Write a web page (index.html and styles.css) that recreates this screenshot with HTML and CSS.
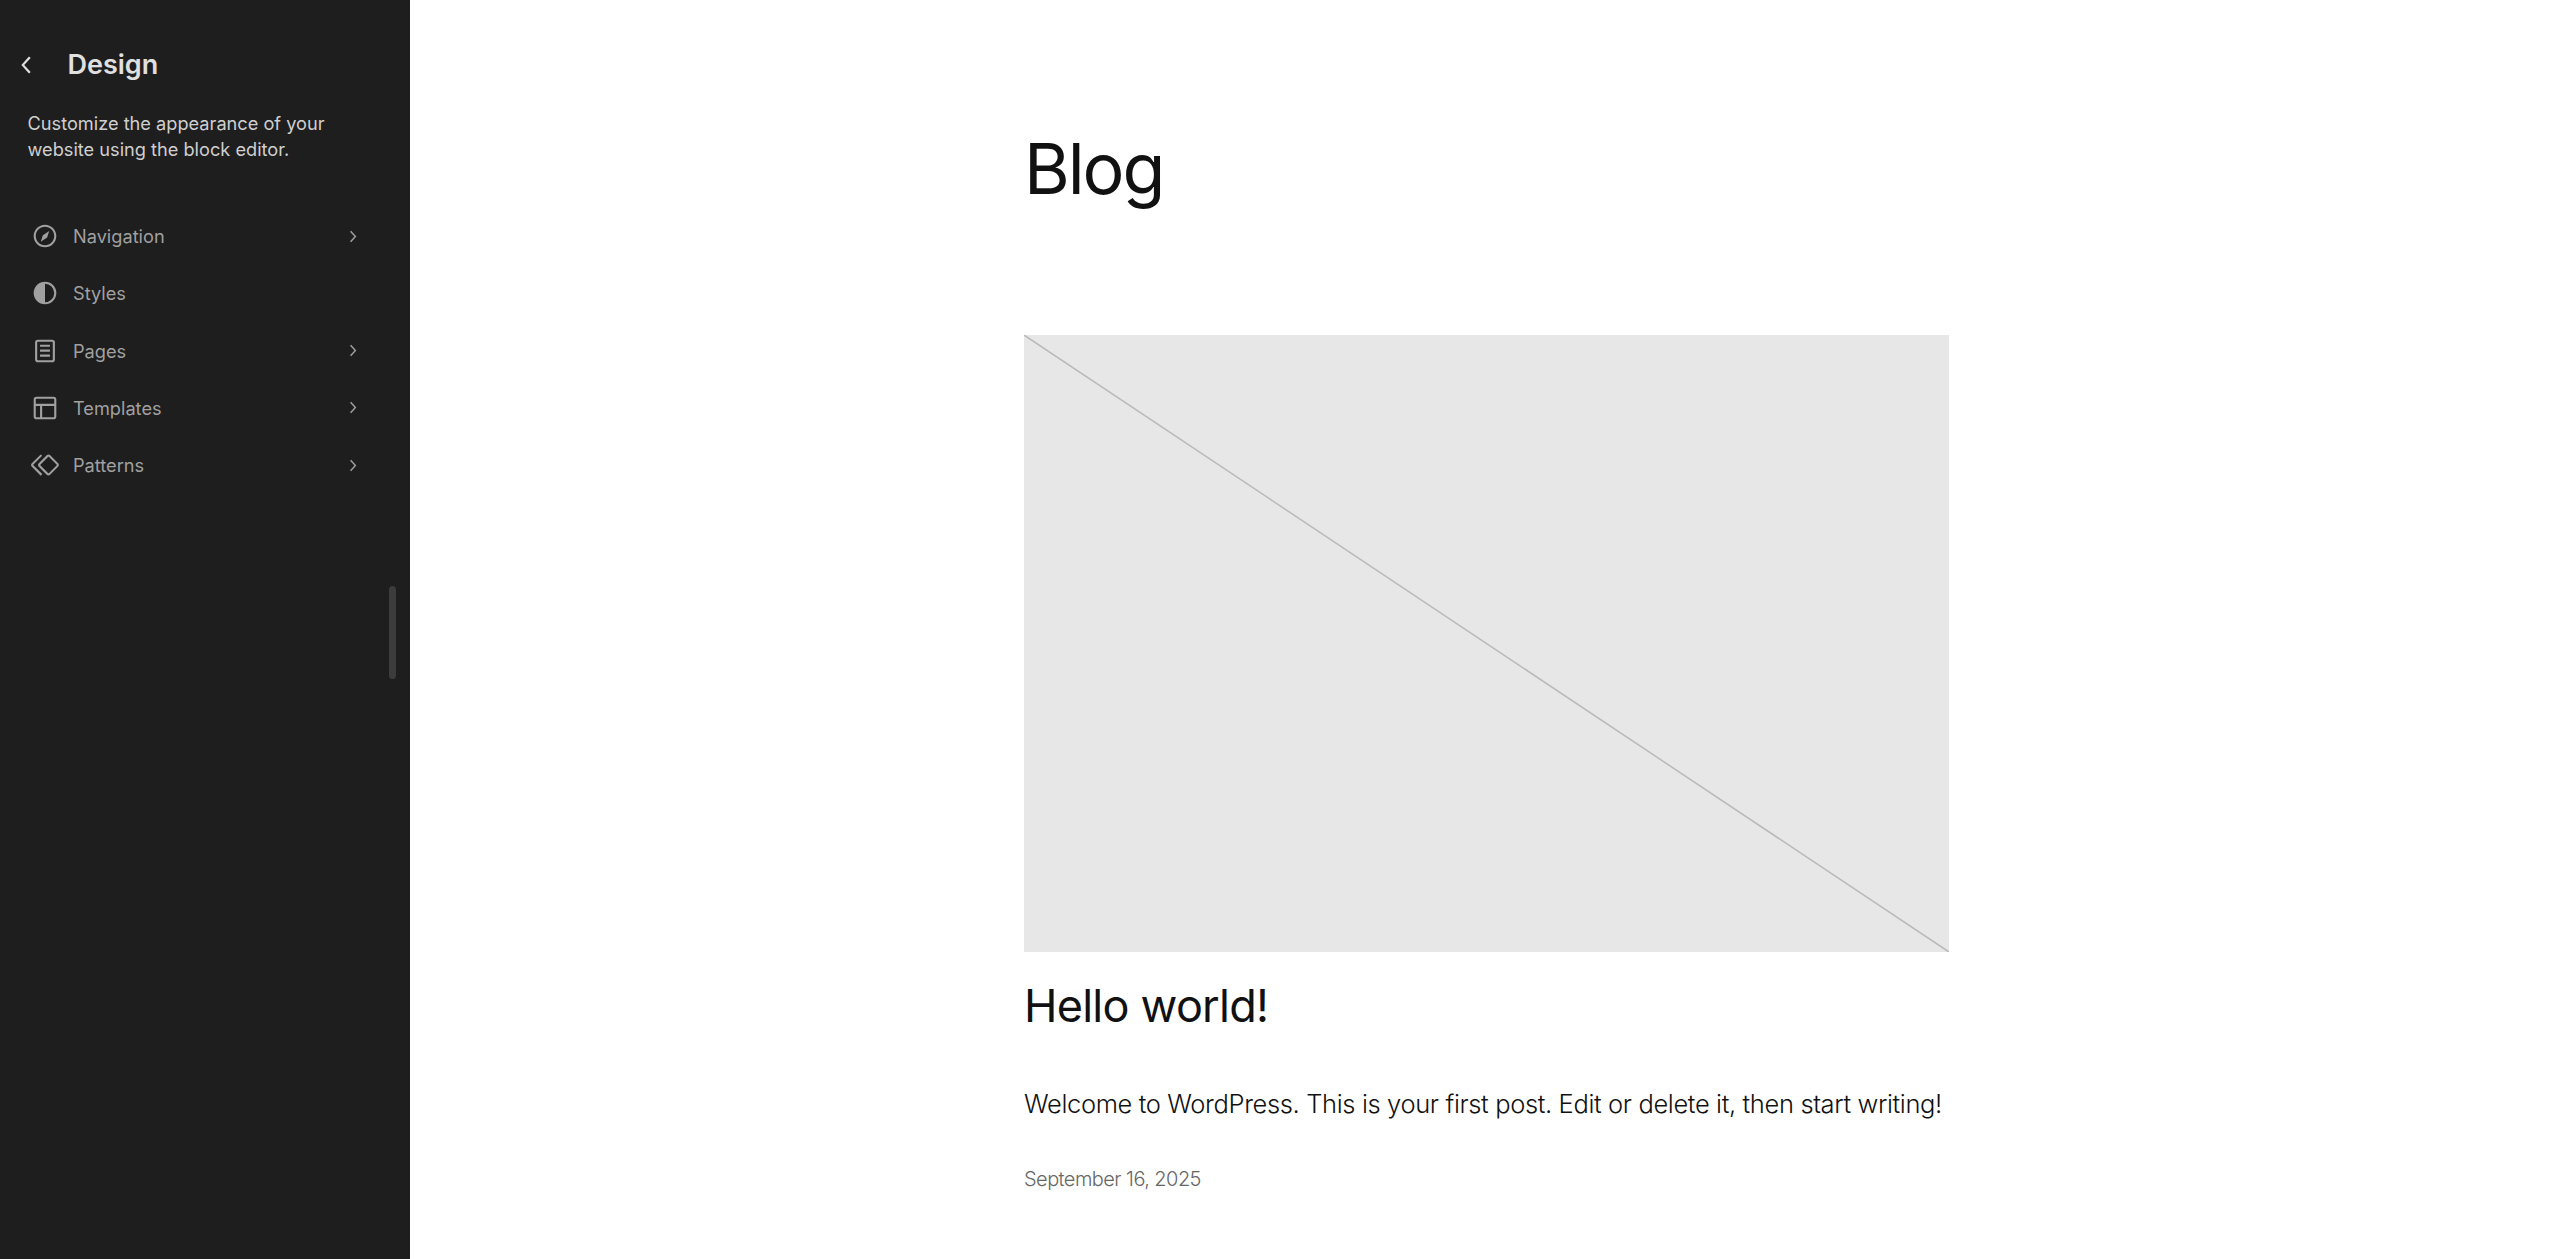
FILE: index.html
```html
<!DOCTYPE html>
<html lang="en">
<head>
<meta charset="utf-8">
<title>Design</title>
<link rel="stylesheet" href="styles.css">
</head>
<body>
<div class="app">
  <aside class="sidebar">
    <header class="side-head">
      <svg class="back" viewBox="0 0 24 24"><path d="M14.6 7l-1.2-1L8 12l5.4 6 1.2-1-4.6-5z"/></svg>
      <h1 class="side-title">Design</h1>
    </header>
    <p class="side-desc">Customize the appearance of your website using the block editor.</p>
    <nav class="menu">
      <a class="item">
        <svg class="ico" viewBox="0 0 24 24"><path d="M12 4c-4.4 0-8 3.6-8 8s3.6 8 8 8 8-3.6 8-8-3.6-8-8-8zm0 14.5c-3.6 0-6.5-2.9-6.5-6.5S8.4 5.5 12 5.5s6.5 2.9 6.5 6.5-2.9 6.5-6.5 6.5zM9 16l4.5-3L15 8.4l-4.5 3L9 16z"/></svg>
        <span class="label">Navigation</span>
        <svg class="chev" viewBox="0 0 24 24"><path d="M10.6 6L9.4 7l4.6 5-4.6 5 1.2 1 5.4-6z"/></svg>
      </a>
      <a class="item">
        <svg class="ico" viewBox="0 0 24 24"><path fill-rule="evenodd" d="M20 12a8 8 0 1 1-16 0 8 8 0 0 1 16 0Zm-1.5 0a6.5 6.5 0 0 1-6.5 6.5v-13a6.5 6.5 0 0 1 6.5 6.5Z"/></svg>
        <span class="label">Styles</span>
      </a>
      <a class="item">
        <svg class="ico" viewBox="0 0 24 24"><path d="M15.5 7.5h-7V9h7V7.5Zm-7 3.5h7v1.5h-7V11Zm7 3.5h-7V16h7v-1.5Z"/><path d="M17 4H7a2 2 0 0 0-2 2v12a2 2 0 0 0 2 2h10a2 2 0 0 0 2-2V6a2 2 0 0 0-2-2ZM7 5.5h10a.5.5 0 0 1 .5.5v12a.5.5 0 0 1-.5.5H7a.5.5 0 0 1-.5-.5V6a.5.5 0 0 1 .5-.5Z"/></svg>
        <span class="label">Pages</span>
        <svg class="chev" viewBox="0 0 24 24"><path d="M10.6 6L9.4 7l4.6 5-4.6 5 1.2 1 5.4-6z"/></svg>
      </a>
      <a class="item">
        <svg class="ico" viewBox="0 0 24 24"><path d="M18 5.5H6a.5.5 0 0 0-.5.5v3h13V6a.5.5 0 0 0-.5-.5zm.5 5H10v8h8a.5.5 0 0 0 .5-.5v-7.5zm-10 0h-3V18a.5.5 0 0 0 .5.5h2.5v-8zM6 4h12a2 2 0 0 1 2 2v12a2 2 0 0 1-2 2H6a2 2 0 0 1-2-2V6a2 2 0 0 1 2-2z"/></svg>
        <span class="label">Templates</span>
        <svg class="chev" viewBox="0 0 24 24"><path d="M10.6 6L9.4 7l4.6 5-4.6 5 1.2 1 5.4-6z"/></svg>
      </a>
      <a class="item">
        <svg class="ico" viewBox="0 0 24 24"><path d="M21.3 10.8l-5.6-5.6c-.7-.7-1.8-.7-2.5 0l-5.6 5.6c-.7.7-.7 1.8 0 2.5l5.6 5.6c.3.3.8.5 1.2.5s.9-.2 1.2-.5l5.6-5.6c.8-.7.8-1.9.1-2.5zm-1 1.4l-5.6 5.6c-.1.1-.3.1-.4 0l-5.6-5.6c-.1-.1-.1-.3 0-.4l5.6-5.6s.1-.1.2-.1.1 0 .2.1l5.6 5.6c.1.1.1.3 0 .4zm-16.6-.4L10 5.5l-1-1-6.3 6.3c-.7.7-.7 1.8 0 2.5L9 19.5l1.1-1.1-6.3-6.3c-.2 0-.2-.2-.1-.3z"/></svg>
        <span class="label">Patterns</span>
        <svg class="chev" viewBox="0 0 24 24"><path d="M10.6 6L9.4 7l4.6 5-4.6 5 1.2 1 5.4-6z"/></svg>
      </a>
    </nav>
    <div class="thumb"></div>
  </aside>
  <main class="main">
    <div class="column">
      <h2 class="page-title">Blog</h2>
      <svg class="placeholder" viewBox="0 0 925 617" preserveAspectRatio="none"><line x1="0" y1="0" x2="925" y2="617" vector-effect="non-scaling-stroke"/></svg>
      <h3 class="post-title">Hello world!</h3>
      <p class="excerpt">Welcome to WordPress. This is your first post. Edit or delete it, then start writing!</p>
      <p class="date">September 16, 2025</p>
    </div>
  </main>
</div>
</body>
</html>
```

FILE: styles.css
```css
html, body {
  margin: 0;
  height: 100%;
  background: #fff;
}
.app {
  display: flex;
  height: 1259px;
  overflow: hidden;
}
.sidebar {
  position: relative;
  flex: 0 0 410px;
  box-sizing: border-box;
  background: #1e1e1e;
  font-family: Inter, "Liberation Sans", sans-serif;
  padding-top: 47px;
}
.side-head {
  display: flex;
  align-items: center;
  height: 36px;
  padding-left: 10px;
}
.back {
  width: 34px;
  height: 34px;
  fill: #e0e0e0;
  flex: none;
}
.side-title {
  margin: 0 0 0 23.5px;
  font-size: 27px;
  line-height: 36px;
  font-weight: 600;
  color: #e0e0e0;
}
.side-desc {
  margin: 28px 0 0;
  padding: 0 40px 0 27.5px;
  font-size: 18.2px;
  line-height: 25.6px;
  color: #cfcfcf;
}
.menu {
  display: flex;
  flex-direction: column;
  margin-top: 45.5px;
  padding: 0 28px;
}
.item {
  display: flex;
  align-items: center;
  height: 57.2px;
  color: #a0a0a0;
}
.ico {
  flex: none;
  width: 34px;
  height: 34px;
  fill: #a0a0a0;
}
.label {
  flex: 1;
  margin-left: 11px;
  font-size: 18.2px;
}
.chev {
  flex: none;
  width: 23px;
  height: 23px;
  fill: #a0a0a0;
  margin-right: 18px;
}
.thumb {
  position: absolute;
  left: 389px;
  top: 586px;
  width: 7px;
  height: 93px;
  border-radius: 4px;
  background: #3c3c3c;
}
.main {
  flex: 1;
  min-width: 0;
  font-family: Inter, "Liberation Sans", sans-serif;
  color: #111;
}
.column {
  width: 925px;
  margin-left: 614px;
  padding-top: 124px;
}
.page-title {
  margin: 0;
  font-size: 70px;
  line-height: 90px;
  font-weight: 400;
  letter-spacing: -2.1px;
}
.placeholder {
  display: block;
  width: 925px;
  height: 617px;
  margin-top: 121px;
  background: #e7e7e7;
  stroke: #b9b9b9;
  stroke-width: 1.5;
}
.post-title {
  margin: 24px 0 0;
  font-size: 45px;
  line-height: 60px;
  font-weight: 400;
  letter-spacing: -0.75px;
}
.excerpt {
  margin: 49.5px 0 0;
  font-size: 25.5px;
  line-height: 36px;
  font-weight: 300;
  letter-spacing: -0.36px;
}
.date {
  margin: 43.5px 0 0;
  font-size: 20px;
  line-height: 28px;
  font-weight: 300;
  color: #666;
  letter-spacing: -0.55px;
}
```
